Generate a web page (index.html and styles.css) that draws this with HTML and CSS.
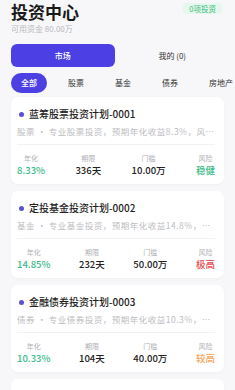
FILE: index.html
```html
<!DOCTYPE html>
<html lang="zh">
<head>
<meta charset="utf-8">
<link rel="stylesheet" href="styles.css">
</head>
<body>
<div class="page">
  <div class="header">
    <div>
      <div class="title">投资中心</div>
      <div class="sub">可用资金 80.00万</div>
    </div>
    <div class="badge">0项投资</div>
  </div>
  <div class="tabs">
    <div class="tab active">市场</div>
    <div class="tab">我的 (0)</div>
  </div>
  <div class="chips">
    <div class="chip active">全部</div>
    <div class="chip">股票</div>
    <div class="chip">基金</div>
    <div class="chip">债券</div>
    <div class="chip">房地产</div>
  </div>
  <div class="list">
    <div class="card">
      <div class="name"><span class="dot"></span>蓝筹股票投资计划-0001</div>
      <div class="desc">股票 · 专业股票投资，预期年化收益8.3%，风险适中，适合稳健型投资者</div>
      <div class="stats">
        <div class="stat"><div class="lab">年化</div><div class="val green">8.33%</div></div>
        <div class="stat"><div class="lab">期限</div><div class="val">336天</div></div>
        <div class="stat"><div class="lab">门槛</div><div class="val">10.00万</div></div>
        <div class="stat"><div class="lab">风险</div><div class="val green">稳健</div></div>
      </div>
    </div>
    <div class="card">
      <div class="name"><span class="dot"></span>定投基金投资计划-0002</div>
      <div class="desc">基金 · 专业基金投资，预期年化收益14.8%，风险较高，适合激进型投资者</div>
      <div class="stats">
        <div class="stat"><div class="lab">年化</div><div class="val green">14.85%</div></div>
        <div class="stat"><div class="lab">期限</div><div class="val">232天</div></div>
        <div class="stat"><div class="lab">门槛</div><div class="val">50.00万</div></div>
        <div class="stat"><div class="lab">风险</div><div class="val red">极高</div></div>
      </div>
    </div>
    <div class="card">
      <div class="name"><span class="dot"></span>金融债券投资计划-0003</div>
      <div class="desc">债券 · 专业债券投资，预期年化收益10.3%，风险较高，适合进取型投资者</div>
      <div class="stats">
        <div class="stat"><div class="lab">年化</div><div class="val green">10.33%</div></div>
        <div class="stat"><div class="lab">期限</div><div class="val">104天</div></div>
        <div class="stat"><div class="lab">门槛</div><div class="val">40.00万</div></div>
        <div class="stat"><div class="lab">风险</div><div class="val orange">较高</div></div>
      </div>
    </div>
    <div class="card">
      <div class="name"><span class="dot"></span>海外房产投资计划-0004</div>
    </div>
  </div>
</div>
</body>
</html>
```
FILE: styles.css
```css
html, body {
  margin: 0;
  padding: 0;
  background: #f7f7f9;
}
body {
  font-family: "Noto Sans CJK SC", "Noto Sans", sans-serif;
  color: #222;
  overflow: hidden;
  height: 390px;
}
.page {
  padding: 0 11px;
}
.header {
  display: flex;
  justify-content: space-between;
  align-items: flex-start;
}
.title {
  font-size: 17px;
  line-height: 24px;
  font-weight: 700;
  color: #1a1a1a;
}
.sub {
  font-size: 8px;
  line-height: 10px;
  color: #b8b8be;
}
.badge {
  margin-top: 3px;
  margin-right: 2px;
  padding: 0 6px;
  height: 11px;
  line-height: 11px;
  font-size: 7.5px;
  color: #3dbb7c;
  background: #e6f7ee;
  border-radius: 3px;
}
.tabs {
  margin-top: 10px;
  display: flex;
  gap: 6px;
}
.tab {
  flex: 1;
  height: 23px;
  display: flex;
  align-items: center;
  justify-content: center;
  font-size: 8px;
  color: #333;
  border-radius: 6px;
}
.tab.active {
  background: #4c40e4;
  color: #fff;
  font-weight: 500;
}
.chips {
  margin-top: 6px;
  display: flex;
  gap: 11px;
  white-space: nowrap;
}
.chip {
  flex: none;
  height: 20px;
  line-height: 20px;
  padding: 0 10px;
  font-size: 8px;
  color: #333;
  border-radius: 10px;
}
.chip.active {
  background: #4c40e4;
  color: #fff;
  font-weight: 500;
}
.list {
  margin-top: 4px;
  display: flex;
  flex-direction: column;
  gap: 7px;
}
.card {
  background: #fff;
  border-radius: 7px;
  padding: 10px 9px 7px 6px;
  box-shadow: 0 1px 3px rgba(0, 0, 0, 0.03);
}
.name {
  display: flex;
  align-items: center;
  font-size: 10px;
  line-height: 14px;
  font-weight: 500;
  color: #222;
}
.dot {
  width: 5px;
  height: 5px;
  border-radius: 50%;
  background: #5a4fd6;
  margin: 0 5px 0 2px;
  flex: none;
}
.desc {
  margin-top: 4px;
  font-size: 8.5px;
  letter-spacing: 0.5px;
  line-height: 12px;
  color: #bdbdc2;
  white-space: nowrap;
  overflow: hidden;
  text-overflow: ellipsis;
}
.stats {
  margin-top: 7px;
  border-top: 1px solid #f2f2f4;
  padding-top: 8px;
  display: flex;
  justify-content: space-between;
}
.stat {
  text-align: center;
}
.lab {
  font-size: 7px;
  line-height: 10px;
  color: #b0b0b5;
}
.val {
  margin-top: 1px;
  font-size: 9.5px;
  line-height: 13px;
  font-weight: 500;
  color: #222;
}
.green { color: #3dbb8a; }
.red { color: #e5484d; }
.orange { color: #f3a35c; }
```
